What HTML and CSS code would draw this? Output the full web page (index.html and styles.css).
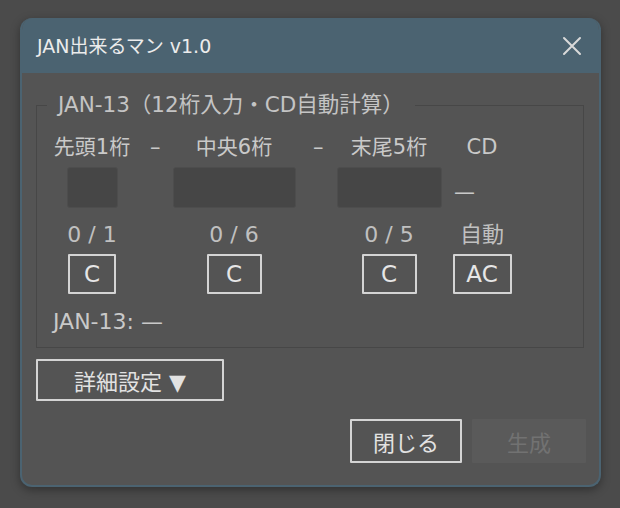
FILE: index.html
```html
<!DOCTYPE html>
<html lang="ja">
<head>
<meta charset="utf-8">
<title>JAN出来るマン v1.0</title>
<link rel="stylesheet" href="styles.css">
</head>
<body>
<div class="dialog">
  <div class="titlebar">
    <span class="title">JAN出来るマン v1.0</span>
    <svg class="close" width="20" height="20" viewBox="0 0 20 20" aria-label="閉じる">
      <path d="M2 2 L18 18 M18 2 L2 18" stroke="#d9d9d9" stroke-width="2" stroke-linecap="round" fill="none"/>
    </svg>
  </div>
  <div class="content">
    <fieldset class="group">
      <legend>JAN-13（12桁入力・CD自動計算）</legend>
      <div class="grid">
        <span class="lbl c1">先頭1桁</span>
        <span class="dash c2 d1">–</span>
        <span class="lbl c3">中央6桁</span>
        <span class="dash c4 d2">–</span>
        <span class="lbl c5">末尾5桁</span>
        <span class="lbl c6">CD</span>

        <span class="field w1 c1"></span>
        <span class="field w6 c3"></span>
        <span class="field w5 c5"></span>
        <span class="cdval c6">—</span>

        <span class="cnt c1">0 / 1</span>
        <span class="cnt c3">0 / 6</span>
        <span class="cnt c5">0 / 5</span>
        <span class="cnt c6">自動</span>

        <button class="cbtn b1 c1">C</button>
        <button class="cbtn b2 c3">C</button>
        <button class="cbtn b2 c5">C</button>
        <button class="cbtn b3 c6">AC</button>
      </div>
      <div class="result">JAN-13: —</div>
    </fieldset>
    <button class="adv">詳細設定 ▼</button>
    <div class="footer">
      <button class="btn close-btn">閉じる</button>
      <button class="btn gen-btn" disabled>生成</button>
    </div>
  </div>
</div>
</body>
</html>
```
FILE: styles.css
```css
* { box-sizing: border-box; }
html, body { margin: 0; }
body {
  width: 620px;
  height: 508px;
  overflow: hidden;
  padding: 18px 0 0 20px;
  background: #4b4b4b;
  font-family: "DejaVu Sans", "Noto Sans CJK JP", sans-serif;
  color: #c9c9c9;
}
.dialog {
  width: 581px;
  height: 469px;
  background: #545454;
  border: 2px solid #4b6371;
  border-top: none;
  border-radius: 12px;
  box-shadow: 0 3px 10px rgba(0, 0, 0, 0.35);
  display: flex;
  flex-direction: column;
  overflow: hidden;
}
.titlebar {
  height: 55px;
  flex: none;
  background: #4b6371;
  display: flex;
  align-items: center;
  justify-content: space-between;
  padding: 0 17px 0 15px;
}
.title {
  font-size: 19px;
  color: #ececec;
  line-height: 24px;
}
.close { display: block; }
.content {
  padding: 18px 15px 0 14px;
  display: flex;
  flex-direction: column;
}
.group {
  margin: 0;
  border: 1px solid #474747;
  padding: 16px 0 13px 10px;
  min-width: 0;
}
.group legend {
  padding: 0 11px;
  font-size: 21.5px;
  line-height: 28px;
  color: #c4c4c4;
}
.grid {
  display: grid;
  grid-template-columns: 90px 35px 124px 40px 106px 80px;
  grid-template-rows: 24px 49px 39px 47px;
}
.c1 { grid-column: 1; }
.c2 { grid-column: 2; }
.c3 { grid-column: 3; }
.c4 { grid-column: 4; }
.c5 { grid-column: 5; }
.c6 { grid-column: 6; }
.lbl {
  font-size: 21px;
  line-height: 24px;
  justify-self: center;
  white-space: nowrap;
}
.dash {
  font-size: 21px;
  line-height: 24px;
  justify-self: start;
}
.d1 { margin-left: 13px; }
.d2 { margin-left: 17px; }
.field {
  align-self: end;
  justify-self: center;
  height: 41px;
  background: #464646;
  border: 1px solid #4d4d4d;
  border-radius: 3px;
}
.w1 { width: 51px; }
.w6 { width: 123px; }
.w5 { width: 105px; }
.cdval {
  justify-self: start;
  align-self: end;
  margin: 0 0 4px 12px;
  font-size: 21px;
  line-height: 24px;
}
.cnt {
  align-self: end;
  justify-self: center;
  font-size: 22px;
  line-height: 24px;
  color: #c0c0c0;
  white-space: nowrap;
}
.cbtn {
  align-self: end;
  justify-self: center;
  height: 40px;
  padding: 0;
  background: transparent;
  border: 2px solid #d4d4d4;
  border-radius: 1px;
  color: #e6e6e6;
  font-family: "DejaVu Sans", "Noto Sans CJK JP", sans-serif;
  font-size: 23px;
}
.b1 { width: 48px; }
.b2 { width: 55px; }
.b3 { width: 59px; }
.result {
  margin: 16px 0 0 6px;
  font-size: 22px;
  line-height: 24px;
}
.adv {
  align-self: flex-start;
  margin-top: 11px;
  width: 188px;
  height: 42px;
  padding: 0;
  background: transparent;
  border: 2px solid #d4d4d4;
  border-radius: 1px;
  color: #e2e2e2;
  font-family: "DejaVu Sans", "Noto Sans CJK JP", sans-serif;
  font-size: 22px;
}
.footer {
  display: flex;
  justify-content: flex-end;
  gap: 10px;
  margin: 18px -2px 0 0;
}
.btn {
  height: 44px;
  padding: 0;
  font-family: "Noto Sans CJK JP", sans-serif;
  font-size: 22px;
  border-radius: 1px;
}
.close-btn {
  width: 112px;
  background: transparent;
  border: 2px solid #d4d4d4;
  color: #e2e2e2;
}
.gen-btn {
  width: 114px;
  background: #5a5a5a;
  border: 2px solid #5a5a5a;
  color: #727272;
}
```
